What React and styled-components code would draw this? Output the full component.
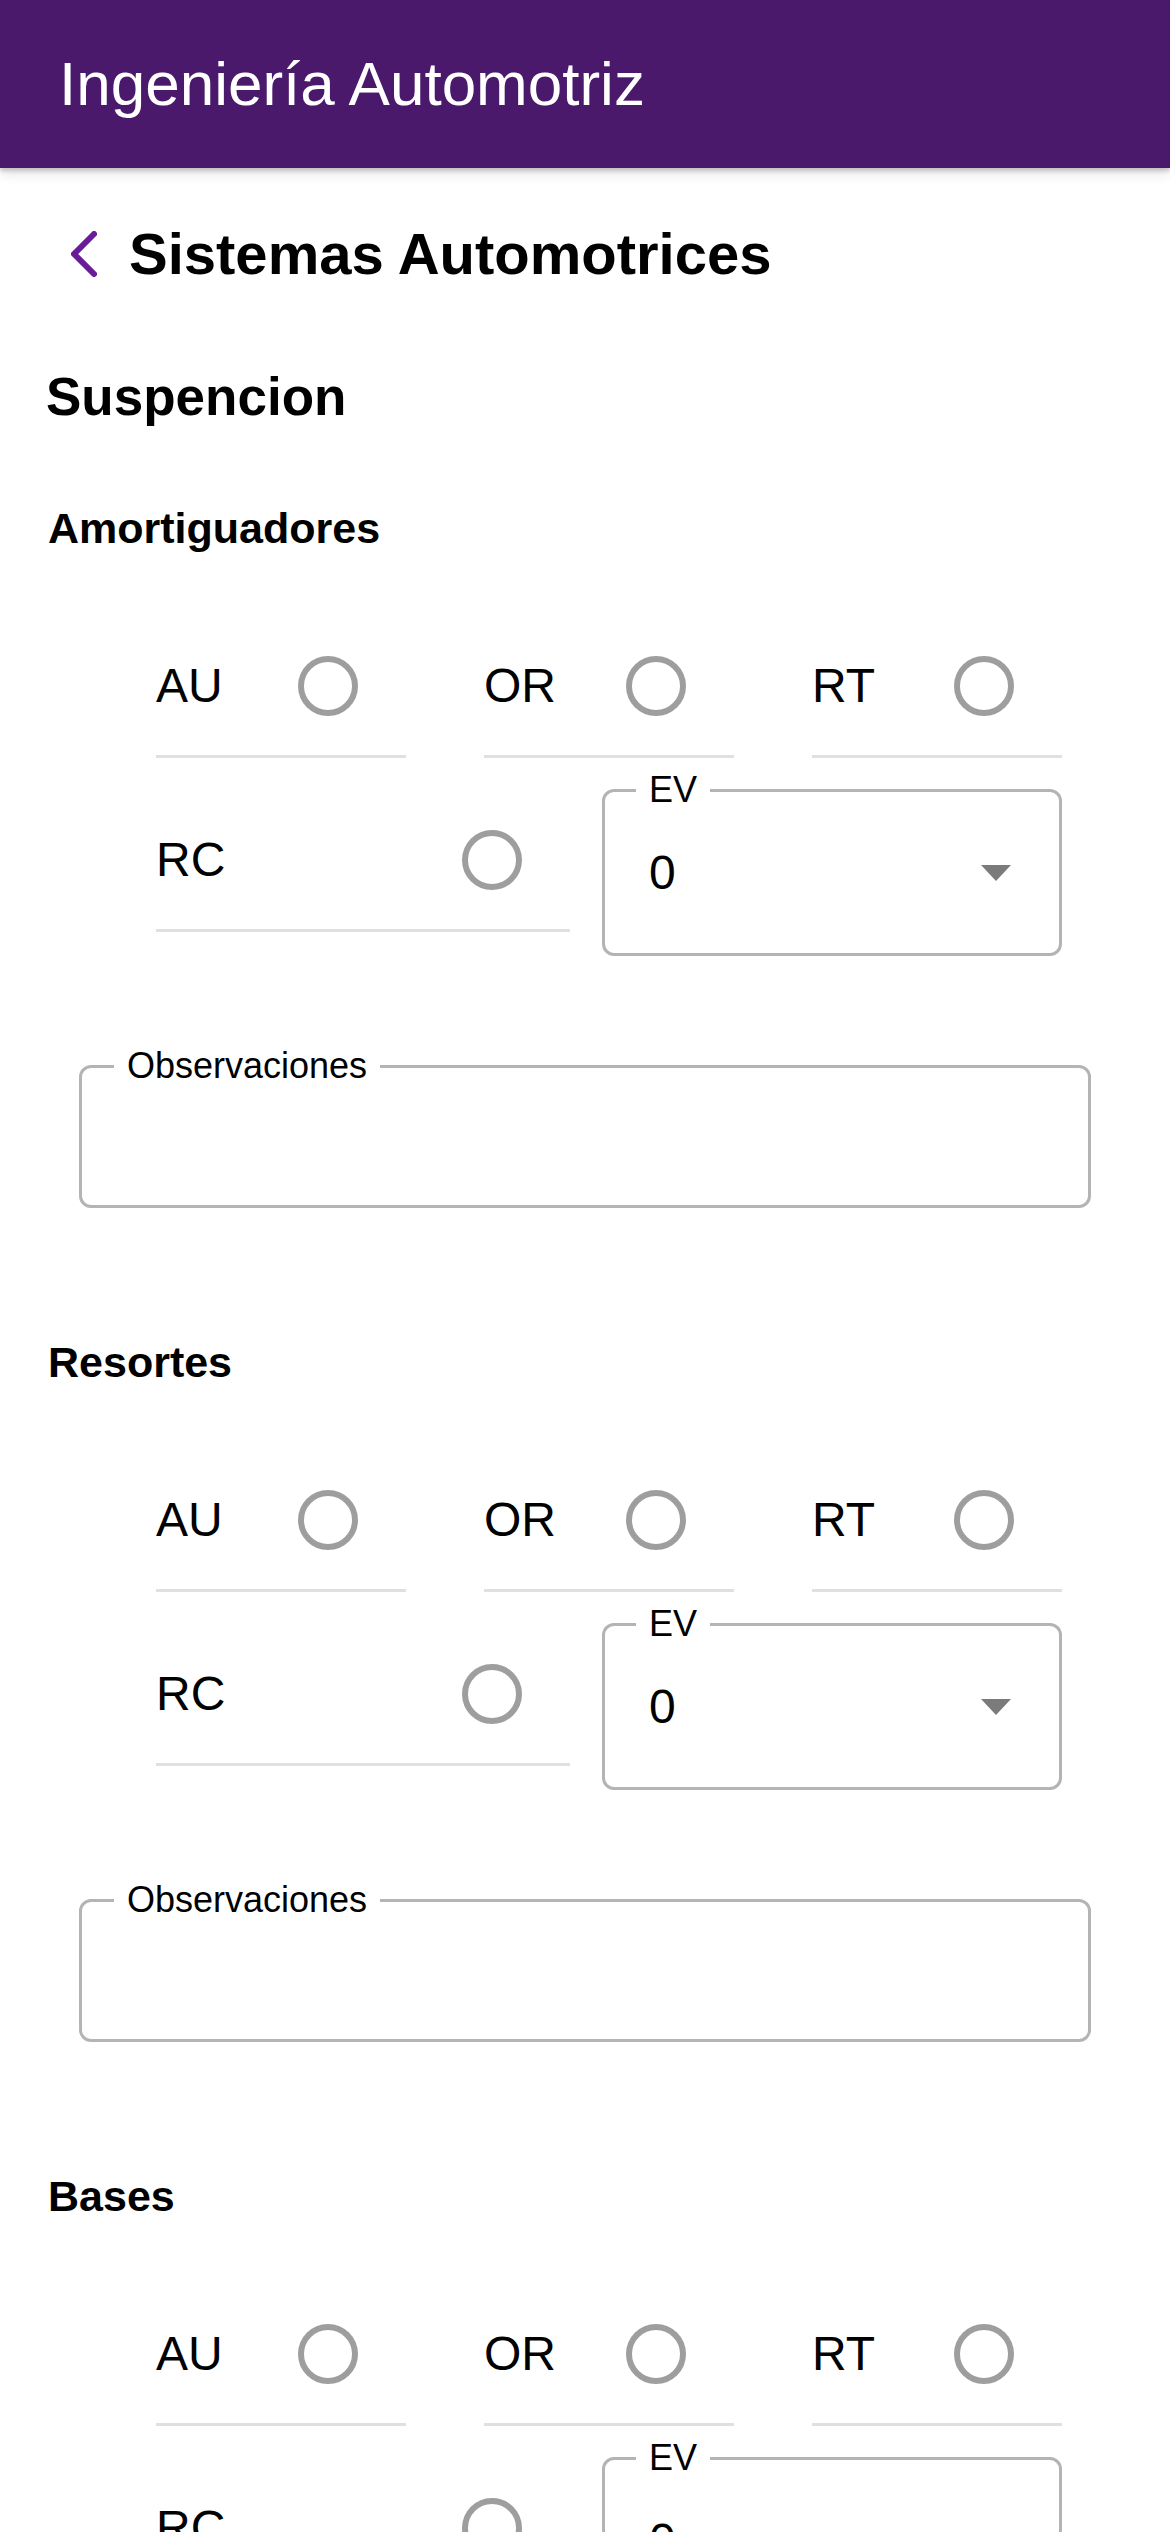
import React from 'react';
import styled, { createGlobalStyle } from 'styled-components';

const GlobalStyle = createGlobalStyle`
  html, body { margin: 0; padding: 0; background: #fff; }
  body { font-family: "Liberation Sans", Arial, Helvetica, sans-serif; color: #000; }
  *, *::before, *::after { box-sizing: border-box; }
`;

const Screen = styled.div`
  height: 100vh;
  display: flex;
  flex-direction: column;
  overflow: hidden;
  background: #fff;
`;

const AppBar = styled.header`
  flex: none;
  height: 168px;
  background: #4a196b;
  display: flex;
  align-items: center;
  padding-left: 59px;
  position: relative;
  z-index: 1;
  box-shadow: 0 3px 4px rgba(0, 0, 0, 0.18), 0 6px 12px rgba(0, 0, 0, 0.1);
`;

const AppTitle = styled.h1`
  margin: 0;
  font-size: 62px;
  font-weight: 400;
  line-height: 60px;
  color: #fff;
`;

const Content = styled.main`
  flex: 1;
  overflow-y: auto;
  scrollbar-width: none;
  padding-bottom: 120px;
  &::-webkit-scrollbar { display: none; }
`;

const NavRow = styled.div`
  display: flex;
  align-items: center;
  gap: 32px;
  height: 57px;
  margin-top: 57px;
  padding-left: 71px;
`;

const BackIcon = styled.svg`
  flex: none;
  width: 26px;
  height: 46px;
`;

const PageTitle = styled.h2`
  margin: 0;
  font-size: 58px;
  font-weight: 700;
  line-height: 57px;
`;

const SectionTitle = styled.h3`
  margin: 89px 0 0;
  padding-left: 46px;
  font-size: 53px;
  font-weight: 700;
  line-height: 52px;
`;

const SubSection = styled.section`
  margin-top: 84px;
  & + & { margin-top: 133px; }
`;

const SubTitle = styled.h4`
  margin: 0;
  padding-left: 48px;
  font-size: 43px;
  font-weight: 700;
  line-height: 42px;
`;

const Fields = styled.div`
  margin: 68px 0 0 156px;
  width: 906px;
`;

const TopRow = styled.div`
  display: grid;
  grid-template-columns: repeat(3, 250px);
  column-gap: 78px;
`;

const BottomRow = styled.div`
  display: grid;
  grid-template-columns: 414px 460px;
  column-gap: 32px;
  align-items: start;
  margin-top: 14px;
`;

const CheckCell = styled.label`
  display: flex;
  align-items: center;
  justify-content: space-between;
  height: 141px;
  margin-top: ${(p) => (p.$offset ? `${p.$offset}px` : '0')};
  padding-right: 48px;
  border-bottom: 3px solid #e0e0e0;
  font-size: 48px;
  line-height: 48px;
  color: #000;
`;

const Radio = styled.span`
  flex: none;
  width: 60px;
  height: 60px;
  border: 6px solid #9e9e9e;
  border-radius: 50%;
`;

const Outlined = styled.fieldset`
  margin: 0;
  min-width: 0;
  padding: 0 48px 15px 31px;
  border: 3px solid #b4b4b4;
  border-radius: 12px;
`;

const FieldLegend = styled.legend`
  padding: 0 13px;
  font-size: 36px;
  line-height: 36px;
  color: #000;
`;

const SelectRow = styled.div`
  display: flex;
  align-items: center;
  justify-content: space-between;
  height: 130px;
  padding-left: 13px;
  font-size: 48px;
  line-height: 48px;
`;

const Caret = styled.svg`
  flex: none;
  width: 30px;
  height: 16px;
`;

const NotesBox = styled(Outlined)`
  margin: 92px 79px 0;
  padding: 0 30px 0 32px;
`;

const NotesInput = styled.textarea`
  display: block;
  width: 100%;
  height: 121px;
  border: none;
  outline: none;
  resize: none;
  background: transparent;
  font-family: inherit;
  font-size: 48px;
  padding: 0 14px;
`;

const CHECKS = ['AU', 'OR', 'RT'];
const PARTS = ['Amortiguadores', 'Resortes', 'Bases'];

function Check({ label, offset }) {
  return (
    <CheckCell $offset={offset}>
      <span>{label}</span>
      <Radio role="radio" aria-checked="false" />
    </CheckCell>
  );
}

function PartBlock({ title }) {
  return (
    <SubSection>
      <SubTitle>{title}</SubTitle>
      <Fields>
        <TopRow>
          {CHECKS.map((c) => (
            <Check key={c} label={c} />
          ))}
        </TopRow>
        <BottomRow>
          <Check label="RC" offset={19} />
          <Outlined>
            <FieldLegend>EV</FieldLegend>
            <SelectRow>
              <span>0</span>
              <Caret viewBox="0 0 30 16">
                <path d="M0 0h30L15 16z" fill="#7b7b7b" />
              </Caret>
            </SelectRow>
          </Outlined>
        </BottomRow>
      </Fields>
      <NotesBox>
        <FieldLegend>Observaciones</FieldLegend>
        <NotesInput aria-label="Observaciones" />
      </NotesBox>
    </SubSection>
  );
}

export default function App() {
  return (
    <>
      <GlobalStyle />
      <Screen>
        <AppBar>
          <AppTitle>Ingeniería Automotriz</AppTitle>
        </AppBar>
        <Content>
          <NavRow>
            <BackIcon viewBox="0 0 26 46" aria-hidden="true">
              <path
                d="M23 3 L3 23 L23 43"
                fill="none"
                stroke="#6a1b9a"
                strokeWidth="6"
                strokeLinecap="round"
                strokeLinejoin="round"
              />
            </BackIcon>
            <PageTitle>Sistemas Automotrices</PageTitle>
          </NavRow>
          <SectionTitle>Suspencion</SectionTitle>
          {PARTS.map((p) => (
            <PartBlock key={p} title={p} />
          ))}
        </Content>
      </Screen>
    </>
  );
}
